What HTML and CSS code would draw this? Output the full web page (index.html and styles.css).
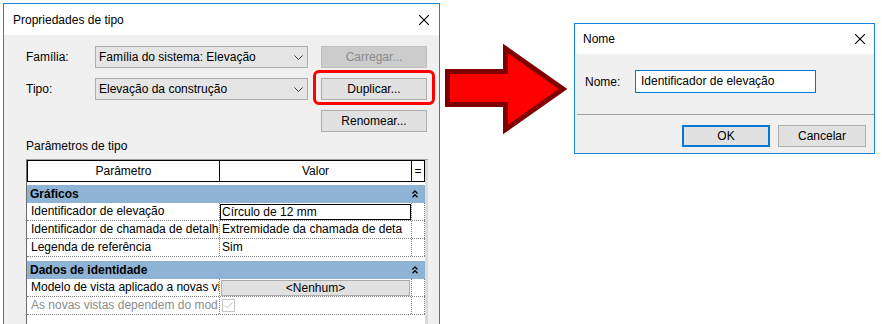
FILE: index.html
```html
<!DOCTYPE html>
<html lang="pt-BR">
<head>
  <meta charset="UTF-8">
  <title>Propriedades de tipo</title>
  <link rel="stylesheet" href="styles.css">
</head>
<body>
  <div class="canvas">

    <!-- Diálogo: Propriedades de tipo -->
    <div class="dlg dlg-type">
      <div class="titlebar">
        <span>Propriedades de tipo</span>
        <svg class="close" width="10" height="10" viewBox="0 0 10 10"><path d="M0 0L10 10M10 0L0 10" stroke="#000" stroke-width="1.1"/></svg>
      </div>
      <div class="type-body">
        <div class="form">
          <label>Família:</label>
          <div class="combo">
            <span>Família do sistema: Elevação</span>
            <svg width="9" height="5" viewBox="0 0 9 5"><path d="M0.5 0.5L4.5 4.5L8.5 0.5" fill="none" stroke="#333"/></svg>
          </div>
          <button class="btn" disabled>Carregar...</button>

          <label>Tipo:</label>
          <div class="combo">
            <span>Elevação da construção</span>
            <svg width="9" height="5" viewBox="0 0 9 5"><path d="M0.5 0.5L4.5 4.5L8.5 0.5" fill="none" stroke="#333"/></svg>
          </div>
          <div class="hl">
            <button class="btn">Duplicar...</button>
          </div>

          <span></span>
          <span></span>
          <button class="btn">Renomear...</button>
        </div>

        <div class="section-label">Parâmetros de tipo</div>

        <div class="props">
          <div class="grid">
            <div class="head">
              <div>Parâmetro</div>
              <div>Valor</div>
              <div>=</div>
            </div>

            <div class="group">
              <span>Gráficos</span>
              <svg width="6" height="8" viewBox="0 0 6 8"><path d="M0.5 3.5L3 1L5.5 3.5M0.5 7.2L3 4.7L5.5 7.2" fill="none" stroke="#000" stroke-width="1.3"/></svg>
            </div>
            <div class="row">
              <div class="p">Identificador de elevação</div>
              <div class="v"><div class="edit">Círculo de 12 mm</div></div>
              <div class="e"></div>
            </div>
            <div class="row">
              <div class="p">Identificador de chamada de detalh</div>
              <div class="v">Extremidade da chamada de deta</div>
              <div class="e"></div>
            </div>
            <div class="row">
              <div class="p">Legenda de referência</div>
              <div class="v">Sim</div>
              <div class="e"></div>
            </div>

            <div class="group second">
              <span>Dados de identidade</span>
              <svg width="6" height="8" viewBox="0 0 6 8"><path d="M0.5 3.5L3 1L5.5 3.5M0.5 7.2L3 4.7L5.5 7.2" fill="none" stroke="#000" stroke-width="1.3"/></svg>
            </div>
            <div class="row">
              <div class="p">Modelo de vista aplicado a novas vi</div>
              <div class="v"><div class="cell-btn">&lt;Nenhum&gt;</div></div>
              <div class="e"></div>
            </div>
            <div class="row">
              <div class="p muted">As novas vistas dependem do mod</div>
              <div class="v">
                <span class="check"><svg width="11" height="11" viewBox="0 0 11 11"><path d="M2 5.5L4.5 8L9.5 2.5" fill="none" stroke="#c4c4c4" stroke-width="1"/></svg></span>
              </div>
              <div class="e"></div>
            </div>
          </div>
          <div class="strip"></div>
        </div>
      </div>
    </div>

    <svg class="arrow" width="134" height="140" viewBox="0 0 134 140">
      <polygon points="7.5,71.5 65.5,71.5 65.5,48.5 123,89 65.5,129.5 65.5,104.5 7.5,104.5" fill="#ff0000" stroke="#800000" stroke-width="5"/>
    </svg>

    <!-- Diálogo: Nome -->
    <div class="dlg dlg-name">
      <div class="titlebar">
        <span>Nome</span>
        <svg class="close" width="10" height="10" viewBox="0 0 10 10"><path d="M0 0L10 10M10 0L0 10" stroke="#000" stroke-width="1.1"/></svg>
      </div>
      <div class="name-body">
        <div class="name-row">
          <label>Nome:</label>
          <div class="input">Identificador de elevação</div>
        </div>
        <div class="sep"></div>
        <div class="actions">
          <button class="btn btn-default">OK</button>
          <button class="btn btn-cancel">Cancelar</button>
        </div>
      </div>
    </div>

  </div>
</body>
</html>
```

FILE: styles.css
```css
body {
  margin: 0;
  background: #fff;
  font-family: "Liberation Sans", Arial, sans-serif;
  font-size: 12px;
  color: #000;
  height: 324px;
  overflow: hidden;
}
.canvas {
  display: flex;
  align-items: flex-start;
  height: 324px;
  overflow: hidden;
}
.dlg {
  border: 1px solid #1883d7;
  background: #f0f0f0;
  box-sizing: border-box;
  flex: none;
}
.titlebar {
  display: flex;
  align-items: center;
  justify-content: space-between;
  background: #fff;
}
.close {
  display: block;
}

/* Propriedades de tipo */
.dlg-type {
  width: 437px;
  height: 340px;
  margin: 3px 0 0 3px;
}
.dlg-type .titlebar {
  height: 31px;
  padding: 0 10px 0 9px;
}
.type-body {
  padding: 11px 0 0 22px;
}
.form {
  display: grid;
  grid-template-columns: 56px 213px 106px;
  grid-auto-rows: 22px;
  column-gap: 13px;
  row-gap: 10px;
}
.form label {
  display: flex;
  align-items: center;
}
.combo {
  display: flex;
  align-items: center;
  justify-content: space-between;
  border: 1px solid #adadad;
  background: #e5e5e5;
  padding: 0 4px 0 3px;
}
.btn {
  font: inherit;
  color: #000;
  border: 1px solid #adadad;
  background: #e1e1e1;
  padding: 0;
  width: 100%;
  height: 100%;
}
.btn:disabled {
  background: #cccccc;
  border-color: #bfbfbf;
  color: #8a8a8a;
}
.hl {
  position: relative;
}
.hl::after {
  content: "";
  position: absolute;
  left: -8px;
  right: -8px;
  top: -8px;
  bottom: -5px;
  border: 3px solid #f00;
  border-radius: 6px;
  pointer-events: none;
}
.section-label {
  margin-top: 7px;
  line-height: 14px;
}
.props {
  display: flex;
  margin-top: 6px;
  width: 402px;
  height: 200px;
  border-left: 1px solid #6a6a6a;
  border-top: 1px solid #a0a0a0;
  box-sizing: border-box;
  background: #fff;
}
.grid {
  width: 398px;
}
.strip {
  width: 3px;
  background: #dcdcdc;
}
.head {
  display: grid;
  grid-template-columns: 192px 192px 12px;
  height: 22px;
  border: 1px solid #000;
  box-sizing: border-box;
  line-height: 20px;
  text-align: center;
}
.head div {
  box-sizing: border-box;
}
.head div:nth-child(1),
.head div:nth-child(2) {
  border-right: 1px solid #000;
}
.group {
  display: flex;
  align-items: center;
  justify-content: space-between;
  height: 18px;
  margin-top: 3px;
  padding: 0 7px 0 3px;
  background: #8fb3d4;
  font-weight: bold;
}
.group.second {
  margin-top: 4px;
}
.row {
  display: grid;
  grid-template-columns: 192px 192px 14px;
  height: 18px;
  border-bottom: 1px dotted #808080;
  box-sizing: border-box;
  line-height: 17px;
}
.row > div {
  box-sizing: border-box;
  white-space: nowrap;
  overflow: hidden;
}
.p {
  padding-left: 4px;
}
.muted {
  color: #8c8c8c;
}
.v {
  border-left: 1px dotted #808080;
  padding-left: 2px;
}
.e {
  border-left: 1px dotted #808080;
  border-right: 1px dotted #808080;
}
.v .edit {
  margin: 1px 0 0 -2px;
  height: 16px;
  line-height: 14px;
  padding-left: 1px;
  border: 1px solid #000;
  box-sizing: border-box;
}
.v .cell-btn {
  margin: 1px 1px 0 -1px;
  height: 16px;
  line-height: 14px;
  border: 1px solid #adadad;
  background: #e1e1e1;
  box-sizing: border-box;
  text-align: center;
}
.check {
  display: block;
  width: 13px;
  height: 13px;
  margin-top: 2px;
  border: 1px solid #c4c4c4;
  box-sizing: border-box;
}
.check svg {
  display: block;
}

/* seta */
.arrow {
  flex: none;
  display: block;
}

/* Nome */
.dlg-name {
  width: 301px;
  height: 131px;
  margin-top: 23px;
}
.dlg-name .titlebar {
  height: 30px;
  padding: 0 9px 0 8px;
}
.name-body {
  padding-top: 16px;
}
.name-row {
  display: flex;
  align-items: center;
  padding-left: 10px;
}
.name-row label {
  width: 50px;
}
.input {
  width: 181px;
  height: 23px;
  box-sizing: border-box;
  border: 1px solid #0078d7;
  background: #fff;
  padding-left: 5px;
  line-height: 20px;
}
.sep {
  margin: 21px 0 0 2px;
  height: 1px;
  background: #a0a0a0;
}
.actions {
  display: flex;
  justify-content: flex-end;
  gap: 8px;
  padding: 10px 8px 0 0;
}
.actions .btn {
  width: 88px;
  height: 22px;
}
.btn-default {
  border: 2px solid #0078d7;
}
```
